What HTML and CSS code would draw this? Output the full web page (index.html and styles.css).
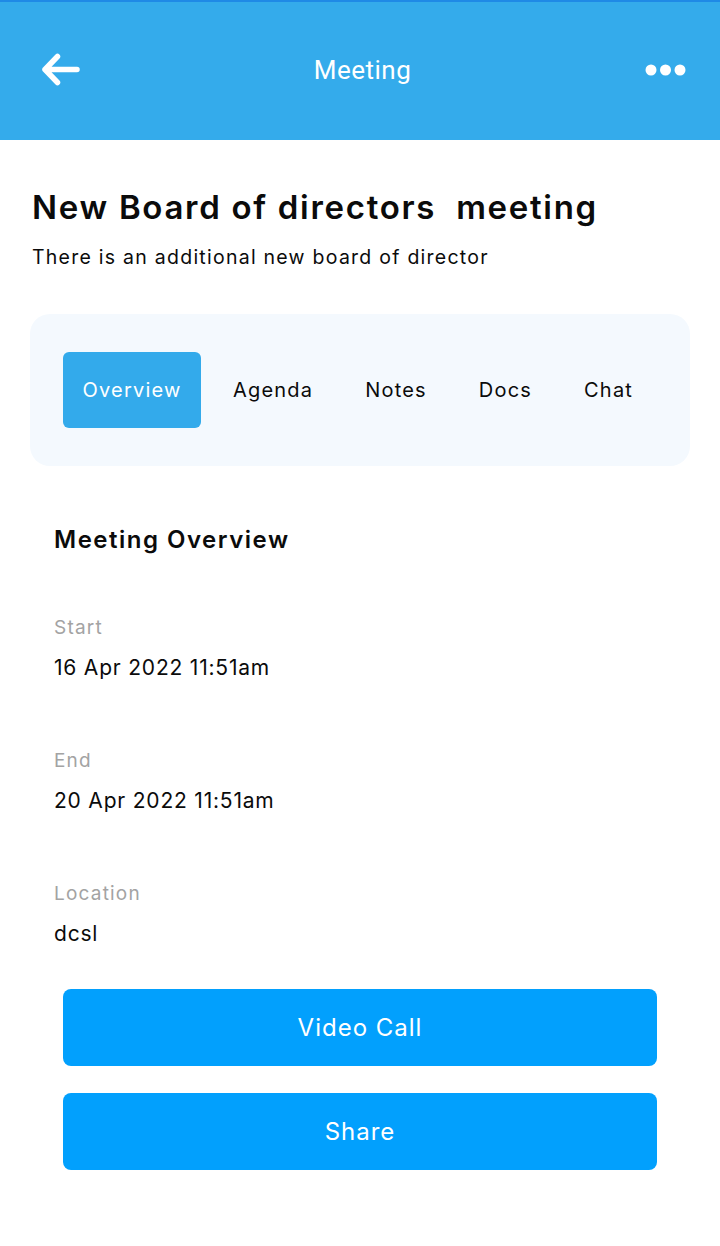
FILE: index.html
```html
<!DOCTYPE html>
<html lang="en">
<head>
<meta charset="utf-8">
<title>Meeting</title>
<link rel="stylesheet" href="styles.css">
</head>
<body>
<header class="topbar">
  <button class="icon-btn back" aria-label="Back">
    <svg width="40" height="40" viewBox="0 0 40 40"><path d="M5 19.5 H37 M5 19.5 L17.5 6.5 M5 19.5 L17.5 32.5" fill="none" stroke="#fff" stroke-width="5.5" stroke-linecap="round" stroke-linejoin="round"/></svg>
  </button>
  <h1 class="topbar-title">Meeting</h1>
  <button class="icon-btn more" aria-label="More">
    <svg width="42" height="14" viewBox="0 0 42 14"><circle cx="6" cy="7" r="5.5" fill="#fff"/><circle cx="20.5" cy="7" r="5.5" fill="#fff"/><circle cx="35" cy="7" r="5.5" fill="#fff"/></svg>
  </button>
</header>

<main class="content">
  <h2 class="meeting-title">New Board of directors&nbsp; meeting</h2>
  <p class="meeting-desc">There is an additional new board of director</p>

  <nav class="tabs">
    <span class="tab active">Overview</span>
    <span class="tab">Agenda</span>
    <span class="tab">Notes</span>
    <span class="tab">Docs</span>
    <span class="tab">Chat</span>
  </nav>

  <section class="overview">
    <h3 class="section-title">Meeting Overview</h3>
    <div class="field">
      <div class="label">Start</div>
      <div class="value">16 Apr 2022 11:51am</div>
    </div>
    <div class="field">
      <div class="label">End</div>
      <div class="value">20 Apr 2022 11:51am</div>
    </div>
    <div class="field">
      <div class="label">Location</div>
      <div class="value">dcsl</div>
    </div>
  </section>

  <div class="actions">
    <button class="action-btn">Video Call</button>
    <button class="action-btn">Share</button>
  </div>
</main>
</body>
</html>
```

FILE: styles.css
```css
* { box-sizing: border-box; }
html, body { margin: 0; padding: 0; background: #fff; }
body {
  font-family: "Inter", "Noto Sans", sans-serif;
  color: #0b0b0b;
  width: 720px;
}

.topbar {
  height: 140px;
  background: #34abeb;
  border-top: 2px solid #1f8ae6;
  display: flex;
  align-items: center;
  justify-content: space-between;
  padding: 0 33px 0 40px;
}
.icon-btn {
  background: none;
  border: 0;
  padding: 0;
  display: flex;
  align-items: center;
  justify-content: center;
}
.back { width: 40px; height: 40px; margin-top: -3px; }
.more { width: 42px; height: 14px; margin-top: -3px; }
.topbar-title {
  margin: 0;
  margin-top: -3px;
  font-family: "Roboto", sans-serif;
  font-weight: 400;
  font-size: 26px;
  letter-spacing: 0.5px;
  color: #fff;
}

.content { padding: 0 30px; }

.meeting-title {
  margin: 47px 0 0 2px;
  font-size: 33px;
  line-height: 40px;
  font-weight: 600;
  letter-spacing: 1.7px;
}
.meeting-desc {
  margin: 16px 0 0 2px;
  font-size: 19.5px;
  line-height: 28px;
  letter-spacing: 1.25px;
}

.tabs {
  margin-top: 43px;
  height: 152px;
  background: #f4f9fe;
  border-radius: 20px;
  padding: 38px 0 0 33px;
  display: flex;
  align-items: flex-start;
}
.tab {
  flex-shrink: 0;
  height: 76px;
  display: flex;
  align-items: center;
  font-size: 20px;
  letter-spacing: 1.2px;
  color: #0b0b0b;
  margin-right: 52px;
}
.tab:last-child { margin-right: 0; }
.tab.active {
  width: 138px;
  justify-content: center;
  background: #33aaeb;
  color: #fff;
  border-radius: 6px;
  margin-right: 32px;
}

.overview { padding: 0 24px; }
.section-title {
  margin: 58px 0 0;
  font-size: 24px;
  line-height: 32px;
  font-weight: 600;
  letter-spacing: 1.5px;
}
.field { margin-top: 59px; }
.label {
  font-size: 19px;
  line-height: 26px;
  color: #a3a3a3;
  letter-spacing: 1.2px;
}
.value {
  margin-top: 13px;
  font-size: 21px;
  line-height: 28px;
  color: #0b0b0b;
  letter-spacing: 0.8px;
}
.field + .field { margin-top: 66px; }

.actions {
  margin-top: 41px;
  padding: 0 33px;
  display: flex;
  flex-direction: column;
  gap: 27px;
}
.action-btn {
  height: 77px;
  border: 0;
  border-radius: 8px;
  background: #02a0fd;
  color: #fff;
  font-family: "Inter", "Noto Sans", sans-serif;
  font-size: 24px;
  letter-spacing: 1px;
}
```
